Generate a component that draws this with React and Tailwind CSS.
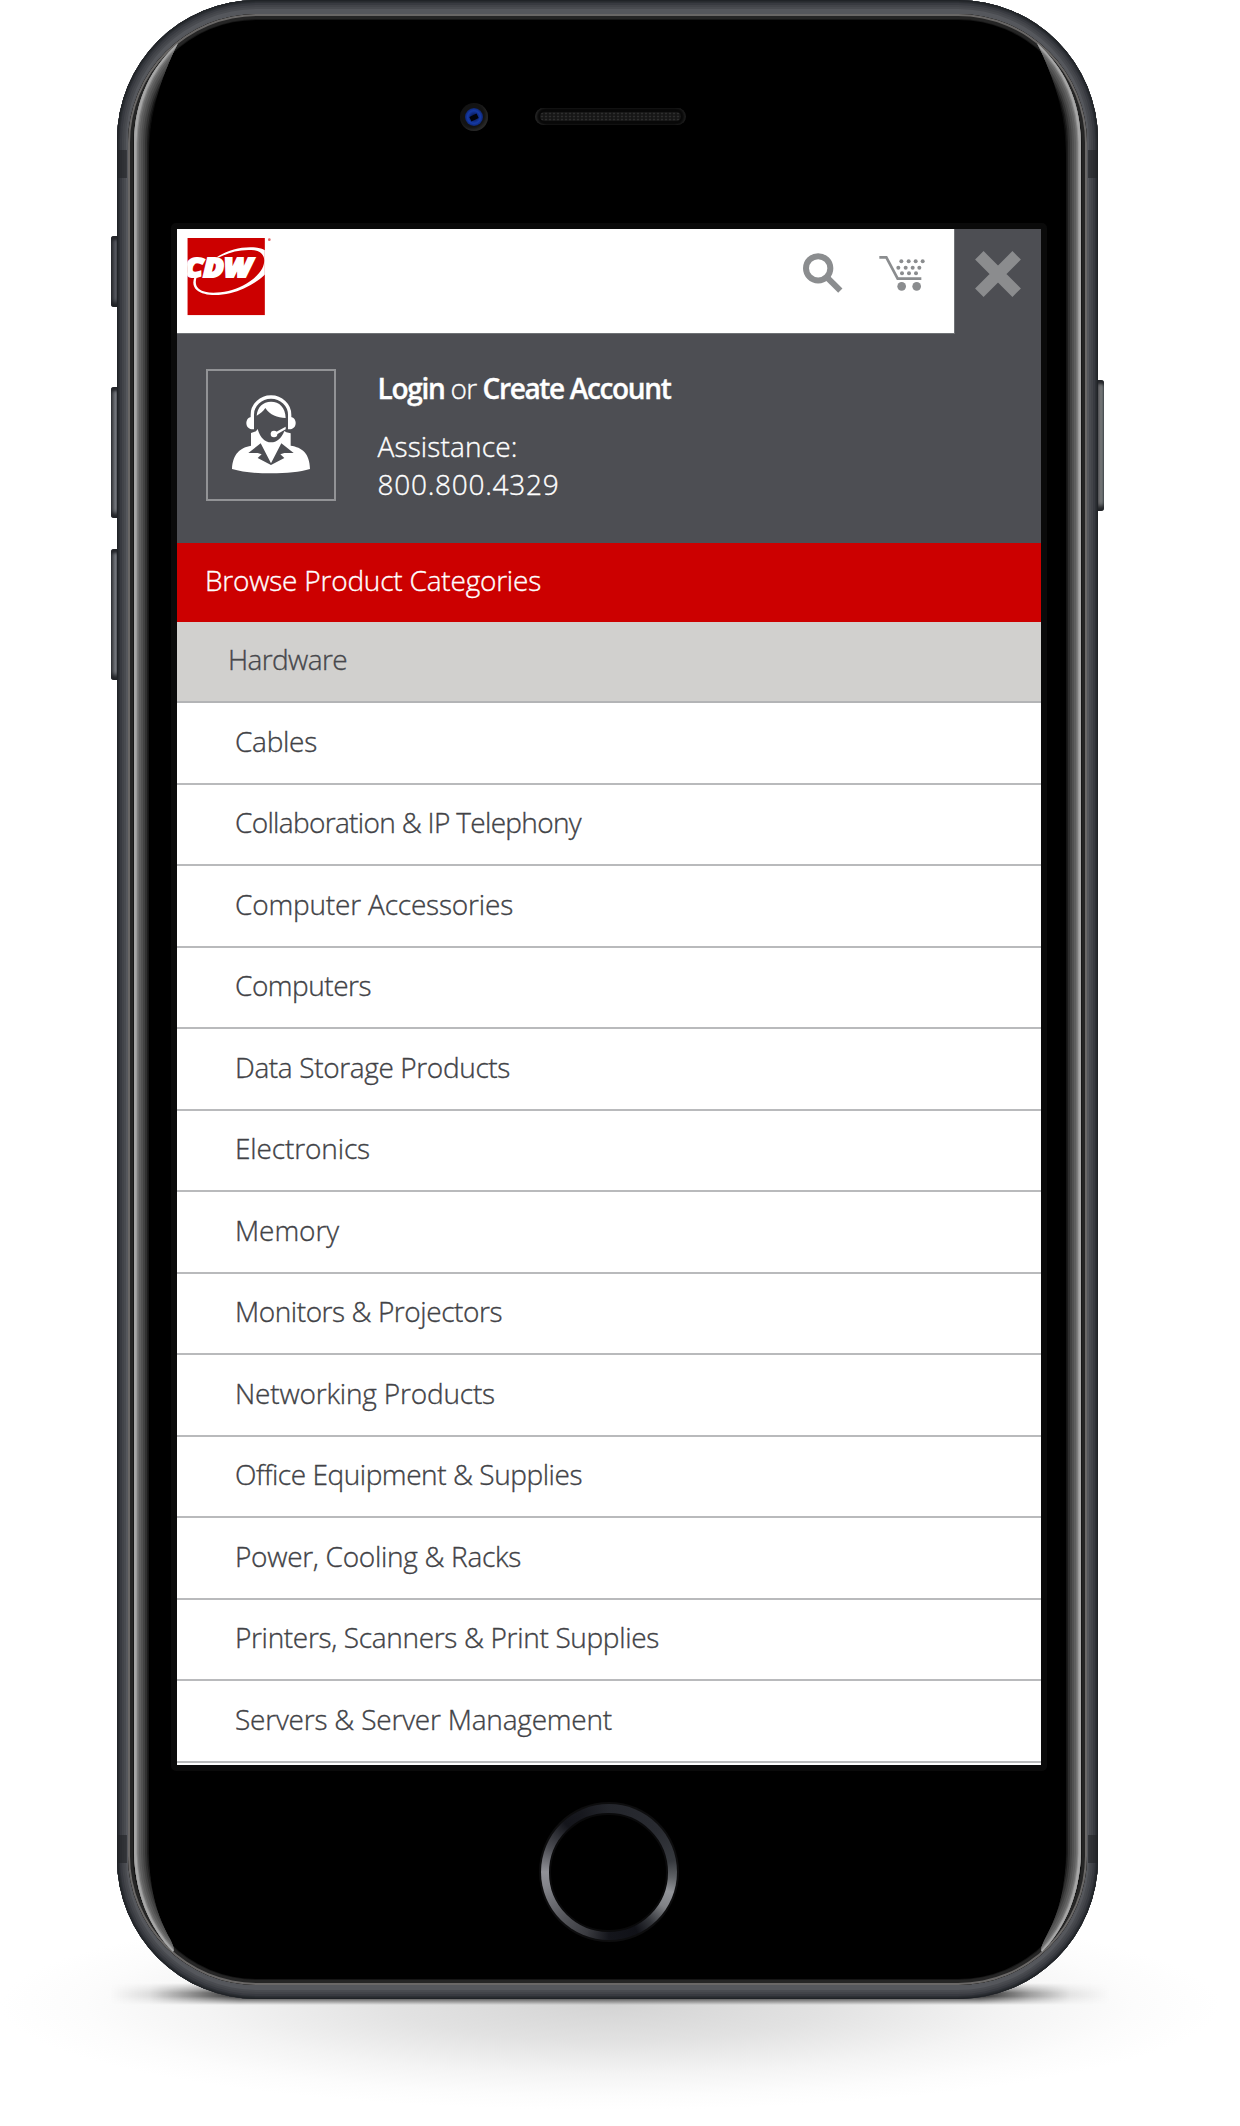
import { useLayoutEffect, useRef } from "react";

const products = [
  ["Cables", 82],
  ["Collaboration & IP Telephony", 346],
  ["Computer Accessories", 278],
  ["Computers", 136],
  ["Data Storage Products", 275],
  ["Electronics", 135],
  ["Memory", 104],
  ["Monitors & Projectors", 267],
  ["Networking Products", 260],
  ["Office Equipment & Supplies", 347],
  ["Power, Cooling & Racks", 286],
  ["Printers, Scanners & Print Supplies", 424],
  ["Servers & Server Management", 377],
];

/* Text tracked so that it takes up the given width. */
function Fit({ w, className = "", children }) {
  const ref = useRef(null);
  useLayoutEffect(() => {
    const el = ref.current;
    el.style.letterSpacing = "0px";
    const natural = el.getBoundingClientRect().width;
    el.style.letterSpacing = `${(w - natural) / children.length}px`;
  }, [w, children]);
  return (
    <span ref={ref} className={`inline-block whitespace-nowrap ${className}`}>
      {children}
    </span>
  );
}

function Logo() {
  return (
    <svg className="h-[84px] w-[90px]" viewBox="45 45 270 252" aria-label="CDW">
      <clipPath id="logoBox">
        <rect x="52" y="54" width="232.500" height="232" />
      </clipPath>
      <g clipPath="url(#logoBox)">
        <rect x="52" y="54" width="233" height="232" fill="#cc0000" />
        <path
          d="M140 112 C175 88 220 78 262 83 C276 85 285 89 290 95 L290 158 C265 185 225 208 180 220 C140 229 100 227 80 210 C69 200 67 185 74 170 L80 172 C75 186 77 199 87 207 C105 221 140 220 175 213 C215 203 262 175 277 145 C289 119 283 96 253 91 C215 87 180 96 148 112 Z"
          fill="#fff"
        />
        <text
          x="43"
          y="170"
          fill="#fff"
          stroke="#fff"
          strokeWidth="6"
          fontSize="79"
          fontWeight="800"
          fontStyle="italic"
          fontFamily="Open Sans, sans-serif"
          textLength="203"
          lengthAdjust="spacingAndGlyphs"
        >
          CDW
        </text>
      </g>
      <circle cx="298" cy="59" r="4" fill="#e06a6a" />
    </svg>
  );
}

function Search() {
  return (
    <svg className="h-[42px] w-[42px]" viewBox="65 96 126 126" fill="none" stroke="#8b8d8f" strokeWidth="18">
      <circle cx="113.500" cy="145" r="36.500" />
      <path d="M140 172 L180 212" />
    </svg>
  );
}

function Cart() {
  const dots = [
    [363, 125], [385, 125], [406, 125], [427, 125],
    [354, 144], [376, 144], [397, 144], [417, 144],
    [365, 161], [386, 161], [407, 161],
  ];
  return (
    <svg className="h-[38px] w-[48px]" viewBox="293 103 144 114" fill="#8b8d8f">
      <path d="M297 113 H318 L352 177 H423" fill="none" stroke="#8b8d8f" strokeWidth="8" />
      {dots.map(([x, y]) => (
        <circle key={`${x}-${y}`} cx={x} cy={y} r="6" />
      ))}
      <circle cx="364" cy="200" r="13" />
      <circle cx="409" cy="200" r="13" />
    </svg>
  );
}

function Close() {
  return (
    <svg className="h-[46px] w-[46px]" viewBox="584 92 138 138" stroke="#8b8c8e" strokeWidth="36">
      <path d="M597 105 L709 217 M709 105 L597 217" />
    </svg>
  );
}

function Agent() {
  return (
    <svg className="h-[80px] w-[80px]" viewBox="153 164 240 240" fill="#fff">
      <path d="M217 242 V226 A56 53 0 0 1 329 226 V242" fill="none" stroke="#fff" strokeWidth="10" />
      <path d="M222 232 C206 231 199 240 199 251 C199 263 207 271 222 270 Z" />
      <path d="M324 232 C340 231 347 240 347 251 C347 263 339 271 324 270 Z" />
      <path d="M230 229 C232 203 249 187 273 187 C298 187 316 204 317 236 C292 235 270 227 256 206 C250 216 241 223 230 229 Z" />
      <path d="M213 281 L228 276 L233 269 C241 296 255 309 273 309 C290 309 304 298 313 275 L319 279 L332 282 V319 C366 324 389 341 390 389 C360 398 320 402 273 402 C225 402 185 398 156 389 C158 343 181 325 213 319 Z" />
      <path d="M205 341 L242 312 L273 372 L273 377 L233 356 L245 345 L233 341 Z" fill="#4d4e53" />
      <path d="M341 341 L304 312 L273 372 L273 377 L313 356 L301 345 L313 341 Z" fill="#4d4e53" />
      <circle cx="282" cy="284" r="10" />
      <path d="M284 280 L317 262 V270 L286 288 Z" />
    </svg>
  );
}

/* Reflection that runs along the curved edge of the glass. */
function Glint({ id, className }) {
  const edge = "M44 0 C18 24 1.500 55 1 100 V1810 C2 1850 16 1884 39 1909";
  const bands = [
    [30, "#0c0c0c"], [27, "#1c1c1c"], [24, "#303030"], [20, "#424242"], [16, "#515151"],
    [12, "#5f5f5f"], [8, "#707070"], [5, "#8b8b8b"], [3, "#a6a6a6"],
  ];
  return (
    <svg className={`h-[1912px] w-[48px] ${className}`} viewBox="0 0 48 1912">
      <clipPath id={id}>
        <path d="M44 0 C18 24 0.500 55 0 100 V1810 C1 1850 15 1884 39 1909 C41 1907 39 1902 36 1896 C23 1872 16 1850 15 1808 V112 C16 72 25 38 44 0 Z" />
      </clipPath>
      <g clipPath={`url(#${id})`} fill="none">
        {bands.map(([w, c]) => (
          <path key={w} d={edge} stroke={c} strokeWidth={w} />
        ))}
      </g>
    </svg>
  );
}

function SideKey({ className }) {
  return (
    <div
      className={`absolute w-[9px] rounded-[3px] bg-gradient-to-r shadow-[inset_0_4px_3px_#24262a,inset_0_-5px_4px_#202226] ${className}`}
    />
  );
}

function Band({ className }) {
  return <div className={`absolute h-7 w-[10px] bg-[#222326]/60 ${className}`} />;
}

function Screen() {
  return (
    <div className="flex h-[1536px] w-[864px] flex-col overflow-hidden bg-white">
      <div className="flex h-[105px] shrink-0 bg-[#4d4e53]">
        <div className="flex h-[105px] w-[778px] items-start border-b border-r border-[#6f7275] bg-white pl-2 pt-[6px]">
          <Logo />
          <div className="ml-auto flex items-start pr-[28px] pt-[17px]">
            <Search />
            <div className="ml-[34px] mt-[2px]">
              <Cart />
            </div>
          </div>
        </div>
        <div className="flex flex-1 justify-center pt-[22px]">
          <Close />
        </div>
      </div>

      <div className="flex h-[208.500px] shrink-0 bg-[#4d4e53] pl-[29px] pt-[35px] text-white">
        <div className="flex h-[132px] w-[130px] items-center justify-center border-2 border-[#929396]">
          <div className="-mt-[2px] ml-[1px]">
            <Agent />
          </div>
        </div>
        <div className="ml-[42px] flex flex-col">
          <div className="flex h-[37px] items-center">
            <Fit w={67} className="font-semibold">Login</Fit>
            <Fit w={26} className="ml-[6px]">or</Fit>
            <Fit w={188} className="ml-[6px] font-semibold">Create Account</Fit>
          </div>
          <div className="mt-[21px] flex h-[38px] items-center">
            <Fit w={140}>Assistance:</Fit>
          </div>
          <div className="flex h-[38px] items-center">
            <Fit w={182}>800.800.4329</Fit>
          </div>
        </div>
      </div>

      <div className="flex h-[79.500px] shrink-0 items-center bg-[#cc0000] pb-[4px] pl-[28.500px] text-white">
        <Fit w={336}>Browse Product Categories</Fit>
      </div>
      <div className="flex h-[81px] shrink-0 items-center border-b-2 border-[#b3b4b6] bg-[#d1d0ce] pb-[5px] pl-[51.500px] text-[#46474b]">
        <Fit w={119}>Hardware</Fit>
      </div>
      <ul>
        {products.map(([name, w]) => (
          <li
            key={name}
            className="flex h-[81.500px] items-center border-b-2 border-[#b9babc] pb-[4px] pl-[58.500px] text-[#414246]"
          >
            <Fit w={w}>{name}</Fit>
          </li>
        ))}
      </ul>
    </div>
  );
}

export default function App() {
  return (
    <main className="relative isolate h-[2126px] w-[1240px] overflow-hidden bg-white font-['Open_Sans',sans-serif] text-[28px] leading-[38px] font-light [-webkit-text-stroke:0.35px]">
      <div className="absolute left-0 top-[1900px] -z-10 h-[210px] w-[1220px] bg-[radial-gradient(closest-side,#d4d4d4,#e2e2e2_35%,#f4f4f4_66%,#fcfcfc_86%,#ffffff)]" />
      <div className="absolute left-[110px] top-[1983px] -z-10 h-[22px] w-[1000px] bg-[linear-gradient(to_right,transparent,rgba(0,0,0,0.1)_4%,rgba(0,0,0,0.4)_8%,rgba(0,0,0,0.8)_13%,rgba(0,0,0,0.8)_87%,rgba(0,0,0,0.35)_92%,rgba(0,0,0,0.08)_96%,transparent)] [mask-image:linear-gradient(transparent,black_45%,black_60%,transparent)]" />

      <SideKey className="left-[111px] top-[236px] h-[71px] from-[#33363b] via-[#55585e] to-[#2c2e32]" />
      <SideKey className="left-[111px] top-[387px] h-[131px] from-[#4a4d52] via-[#74777c] to-[#2c2e32]" />
      <SideKey className="left-[111px] top-[549px] h-[131px] from-[#4a4d52] via-[#74777c] to-[#2c2e32]" />
      <SideKey className="left-[1095px] top-[380px] h-[131px] from-[#2c2e32] via-[#6b6b6c] to-[#98a2a3]" />

      <div className="relative ml-[117px] h-[1999px] w-[981px] rounded-[140px] bg-[#55575c] px-[11px] py-[14px] shadow-[inset_0_0_0_1px_#202327,inset_0_0_0_2px_#282b2f,inset_0_0_0_3px_#2e3136,inset_0_0_0_5px_#383a40,inset_0_0_0_7px_#424449,inset_0_0_0_9px_#494b50]">
        <Band className="left-0 top-[150px]" />
        <Band className="right-0 top-[150px]" />
        <Band className="left-0 top-[1835px]" />
        <Band className="right-0 top-[1835px]" />
        <div className="relative flex h-full w-full flex-col items-center rounded-[129px] bg-black shadow-[inset_0_0_0_2px_#696766,inset_0_0_0_5px_#252525,inset_0_0_0_6px_#161616]">
          <Glint id="glintLeft" className="absolute left-[6px] top-[29px]" />
          <Glint id="glintRight" className="absolute right-[6px] top-[29px] -scale-x-100" />

          <div className="flex h-[209px] w-full shrink-0 items-start pl-[332px] pt-[89px]">
            <div className="flex size-[28px] items-center justify-center rounded-full bg-[#131313] shadow-[inset_-2px_-2px_3px_#2a2a2a]">
              <div className="flex size-[18px] items-center justify-center rounded-full bg-[radial-gradient(circle,#0b1f66_20%,#153aa6_50%,#0b1c58_80%,#050a1c)]">
                <div className="h-[5px] w-[8px] -rotate-[25deg] bg-[#02040c]" />
              </div>
            </div>
            <div className="ml-[47px] mt-[5px] flex h-[17px] w-[151px] items-center rounded-full bg-[#080808] px-[5px] shadow-[inset_2px_0_2px_#252525,inset_-2px_0_2px_#1d1d1d]">
              <div className="h-[9px] w-full rounded-full bg-[#161616] bg-[radial-gradient(#2e2e2e_0.8px,transparent_1.6px)] bg-[size:4px_3px]" />
            </div>
          </div>

          <div className="ml-[2px] shrink-0 rounded-[5px] border-[6px] border-[#0a0a0a]">
            <Screen />
          </div>

          <div className="mt-[31px] ml-[2px] flex size-[140px] shrink-0 items-center justify-center rounded-full bg-[#0d0d0e]">
            <div className="flex size-[136px] items-center justify-center rounded-full bg-[conic-gradient(#24262c,#292b31_50deg,#36393e_80deg,#606367_95deg,#929499_108deg,#808286_122deg,#33353a_140deg,#101117_155deg,#14151b_180deg,#3a3b40_200deg,#55565b_225deg,#85868c_258deg,#909197_270deg,#4b4c52_292deg,#14151b_318deg,#17181e_335deg,#24262c)]">
              <div className="size-[119px] rounded-full border-2 border-[#0a0a0b] bg-black" />
            </div>
          </div>
        </div>
      </div>
    </main>
  );
}
